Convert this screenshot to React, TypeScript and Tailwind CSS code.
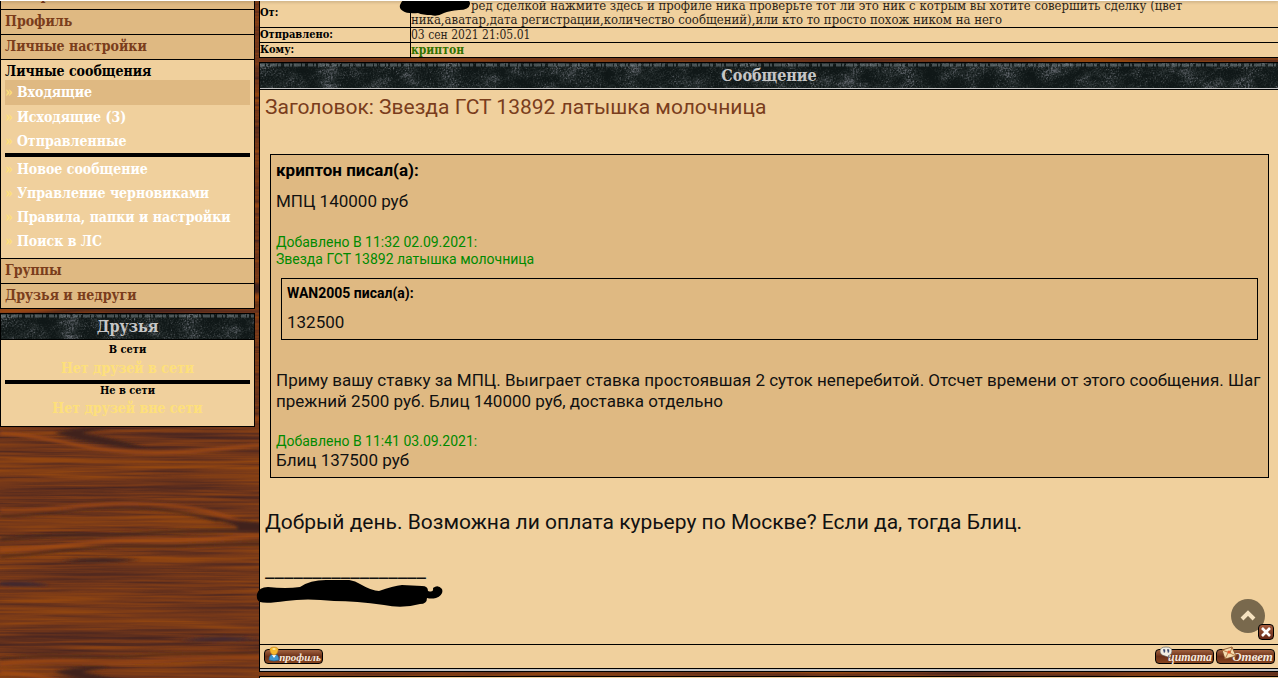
import type { ReactNode } from 'react'
import { ChevronUp } from 'lucide-react'

const SERIF = "font-['DejaVu_Serif_Condensed','DejaVu_Serif',serif]"

const FOLDERS = [
  { label: 'Входящие', active: true },
  { label: 'Исходящие (3)' },
  { label: 'Отправленные' },
]

const TOOLS = [
  { label: 'Новое сообщение' },
  { label: 'Управление черновиками' },
  { label: 'Правила, папки и настройки' },
  { label: 'Поиск в ЛС' },
]

function Filters() {
  return (
    <svg className="absolute size-0" aria-hidden="true">
      <defs>
        <filter id="wood" x="0" y="0" width="100%" height="100%" colorInterpolationFilters="sRGB">
          <feTurbulence type="fractalNoise" baseFrequency="0.004 0.035" numOctaves="2" seed="12" result="bands" />
          <feTurbulence type="fractalNoise" baseFrequency="0.008 0.3" numOctaves="3" seed="7" result="fibre" />
          <feComposite in="bands" in2="fibre" operator="arithmetic" k1="0" k2="0.45" k3="0.55" k4="0" />
          <feColorMatrix values="1 0 0 0 0  1 0 0 0 0  1 0 0 0 0  0 0 0 0 1" />
          <feComponentTransfer>
            <feFuncR type="table" tableValues="0.2 0.24 0.34 0.46 0.56 0.6 0.62" />
            <feFuncG type="table" tableValues="0.12 0.13 0.17 0.22 0.27 0.29 0.3" />
            <feFuncB type="table" tableValues="0.13 0.13 0.12 0.1 0.07 0.06 0.05" />
          </feComponentTransfer>
        </filter>
        <filter id="stone" x="0" y="0" width="100%" height="100%" colorInterpolationFilters="sRGB">
          <feTurbulence type="fractalNoise" baseFrequency="0.05 0.07" numOctaves="4" seed="4" result="big" />
          <feTurbulence type="fractalNoise" baseFrequency="0.6" numOctaves="2" seed="9" result="fine" />
          <feComposite in="big" in2="fine" operator="arithmetic" k1="0" k2="0.5" k3="0.5" k4="0" />
          <feColorMatrix values="1 0 0 0 0  1 0 0 0 0  1 0 0 0 0  0 0 0 0 1" />
          <feComponentTransfer>
            <feFuncR type="table" tableValues="0.06 0.06 0.06 0.07 0.14 0.32 0.46 0.5" />
            <feFuncG type="table" tableValues="0.09 0.09 0.09 0.1 0.17 0.34 0.48 0.5" />
            <feFuncB type="table" tableValues="0.09 0.09 0.09 0.1 0.17 0.36 0.5 0.5" />
          </feComponentTransfer>
        </filter>
        <filter id="soft" x="-10%" y="-50%" width="120%" height="200%">
          <feGaussianBlur stdDeviation="1.4" />
        </filter>
      </defs>
    </svg>
  )
}

function Wood() {
  return (
    <svg className="absolute inset-0 -z-10 size-full" aria-hidden="true">
      <defs>
        <g id="grain" filter="url(#soft)" fill="none">
          <path d="M0 3C60 7 80 20 135 22S220 18 262 15" stroke="#a34b14" strokeWidth="3" />
          <path d="M54 3Q75-3 110-2L82 3Q120 10 150 19Q105 18 54 3Z" fill="#3f231d" />
          <path d="M0 80C50 83 100 69 165 75S225 91 260 96" stroke="#9c4715" strokeWidth="3" />
          <path d="M0 86C50 86 90 75 130 77S190 84 218 91" stroke="#45251d" strokeWidth="2" />
          <path d="M175 81Q215 88 262 93V100L235 100Q245 96 218 91Z" fill="#3f231d" />
          <path d="M0 109C50 105 75 105 105 105S190 98 262 101" stroke="#45251d" strokeWidth="3" />
          <path d="M0 120C70 118 90 109 145 110S220 107 262 106" stroke="#a34b14" strokeWidth="3" />
          <path d="M0 127C60 122 90 115 145 116S220 113 262 114" stroke="#45251d" strokeWidth="2" />
          <path d="M60 131Q98 126 140 130Q98 134 60 131Z" fill="#3b2222" />
          <path d="M0 152Q30 151 50 155Q25 157 0 155ZM180 210Q220 204 262 209Q220 213 180 210Z" fill="#3b2530" />
          <path d="M0 229C60 222 90 231 140 226S220 225 262 223" stroke="#45251d" strokeWidth="2" />
          <path d="M0 234C60 228 90 235 150 231S220 228 262 227" stroke="#9c4715" strokeWidth="3" />
        </g>
      </defs>
      <rect width="100%" height="100%" filter="url(#wood)" />
      <use href="#grain" y="191" />
      <use href="#grain" y="430" />
      <use href="#grain" y="669" />
    </svg>
  )
}

function StoneHeader({ children }: { children: ReactNode }) {
  return (
    <h2 className="relative isolate flex h-[25px] items-center justify-center overflow-hidden text-base font-bold text-[#c6c6c6]">
      <svg className="absolute inset-0 -z-10 size-full" aria-hidden="true">
        <rect width="100%" height="100%" filter="url(#stone)" />
        <line x1="0" y1="2" x2="100%" y2="2" stroke="#8b969c" strokeOpacity="0.45" strokeWidth="3" strokeDasharray="5 1 2 2 7 1 3 3" />
      </svg>
      {children}
    </h2>
  )
}

function MenuRow({ children }: { children: ReactNode }) {
  return (
    <a href="#" className="flex h-[25px] items-center border-b border-black bg-[#dfb982] px-1 pb-0.5 text-[#7a3d1c]">
      {children}
    </a>
  )
}

function SubItem({ label, active }: { label: string; active?: boolean }) {
  return (
    <li className={active ? 'bg-[#dfb982] pb-px' : ''}>
      <a href="#" className="flex h-6 items-center gap-1 text-white">
        <span className="text-[#fee07a]">»</span>
        {label}
      </a>
    </li>
  )
}

function Sidebar() {
  return (
    <aside className="w-[255px] shrink-0 text-sm font-bold">
      <nav className="border-x border-black">
        <a href="#" className="flex h-[10px] items-end overflow-hidden border-b border-black bg-[#dfb982] px-1 pb-1 text-[#7a3d1c]">
          Обзор
        </a>
        <MenuRow>Профиль</MenuRow>
        <MenuRow>Личные настройки</MenuRow>
        <div className="border-b border-black bg-[#f0d09d] px-1 pb-[5px]">
          <p className="h-5 leading-[22px]">Личные сообщения</p>
          <ul>
            {FOLDERS.map((item) => (
              <SubItem key={item.label} {...item} />
            ))}
          </ul>
          <hr className="border-0 border-t-4 border-black" />
          <ul>
            {TOOLS.map((item) => (
              <SubItem key={item.label} {...item} />
            ))}
          </ul>
        </div>
        <MenuRow>Группы</MenuRow>
        <MenuRow>Друзья и недруги</MenuRow>
      </nav>
      <section className="mt-1 border border-black bg-[#f0d09d] text-center">
        <StoneHeader>Друзья</StoneHeader>
        <div className="border-t border-black px-1 pb-2">
          <h3 className="h-[18px] text-[11px] leading-5">В сети</h3>
          <p className="h-[22px] leading-5 text-[#fee07a]">Нет друзей в сети</p>
          <hr className="border-0 border-t-4 border-black" />
          <h3 className="text-[11px] leading-[14px]">Не в сети</h3>
          <p className="leading-5 text-[#fee07a]">Нет друзей вне сети</p>
        </div>
      </section>
    </aside>
  )
}

function Details() {
  return (
    <table className="-mt-px w-full border-collapse border border-t-0 border-r-0 border-black bg-[#f0d09d] text-xs leading-[14px]">
      <tbody>
        <tr className="border-b border-black">
          <th className="w-[151px] border-r border-black p-0 text-left text-[11px]">От:</th>
          <td className="relative p-0 text-[13px] text-[#2c2418]">
            <svg className="absolute -top-1 -left-3 h-[22px] w-[75px]" viewBox="0 0 75 22" aria-hidden="true">
              <path d="M1 10Q4 2 12 3L58 2Q72 4 71 9Q70 15 60 15Q50 16 45 18Q38 22 32 20Q24 20 19 18Q8 19 4 16Q0 14 1 10Z" />
            </svg>
            <span className="inline-block w-[60px]" />
            ред сделкой нажмите здесь и профиле ника проверьте тот ли это ник с котрым вы хотите совершить сделку (цвет
            <br />
            ника,аватар,дата регистрации,количество сообщений),или кто то просто похож ником на него
          </td>
        </tr>
        <tr className="border-b border-black">
          <th className="border-r border-black p-0 text-left text-[11px]">Отправлено:</th>
          <td className="p-0 text-[#2c2418]">03 сен 2021 21:05.01</td>
        </tr>
        <tr>
          <th className="border-r border-black p-0 text-left text-[11px]">Кому:</th>
          <td className="p-0">
            <a href="#" className="font-bold text-[#317100]">криптон</a>
          </td>
        </tr>
      </tbody>
    </table>
  )
}

function WoodButton({ label, icon, className }: { label: string; icon: ReactNode; className?: string }) {
  return (
    <button
      type="button"
      className={`relative flex h-[15px] w-[59px] items-center justify-end rounded border border-black bg-linear-to-b from-[#a0623f] via-[#6c3018] to-[#87451f] pr-px font-['Liberation_Serif',serif] leading-3 font-bold text-[#f5e9df] italic ${className ?? ''}`}
    >
      {icon}
      {label}
    </button>
  )
}

function UserIcon() {
  return (
    <svg className="absolute -top-1 left-0.5 h-4 w-[14px]" viewBox="0 0 14 16" aria-hidden="true">
      <path d="M2 14Q2 8 7 8T12 14Q7 16 2 14Z" fill="#3d95cc" stroke="#1c5d8c" strokeWidth=".6" />
      <path d="M5 9L7 12L9 9Z" fill="#fff" />
      <path d="M3 5Q2 1 7 1T11 5Q10 9 7 9T3 5Z" fill="#f5b82e" stroke="#b8741c" strokeWidth=".5" />
      <path d="M5 3Q7 1 9 3Q7 5 5 3Z" fill="#ffe897" />
    </svg>
  )
}

function QuoteIcon() {
  return (
    <svg className="absolute -top-1 left-1 h-[13px] w-3" viewBox="0 0 12 13" aria-hidden="true">
      <path d="M6 1Q12 1 12 5T8 10L11 12L5 10Q0 9 0 5T6 1Z" fill="#f2eee2" stroke="#555" strokeWidth=".6" />
      <path d="M3 3.5H5V5.5L4 7M7 3.5H9V5.5L8 7" fill="#39476d" stroke="#39476d" strokeWidth=".4" />
    </svg>
  )
}

function EnvelopeIcon() {
  return (
    <svg className="absolute -top-1 left-1 h-[15px] w-4" viewBox="0 0 16 15" aria-hidden="true">
      <path d="M1 4L11 1L15 10L4 13Z" fill="#f5dcae" stroke="#7d4b25" strokeWidth=".8" />
      <path d="M1 4L9 7L11 1M4 13L7 7M15 10L9 7" fill="none" stroke="#a55e2b" strokeWidth=".8" />
      <circle cx="8" cy="6" r="1.6" fill="#e4572a" />
    </svg>
  )
}

function Message() {
  return (
    <section className="mt-1 border border-r-0 border-black bg-[#f0d09d]">
      <StoneHeader>Сообщение</StoneHeader>
      <div className="h-0.5 border-b border-black bg-[#c4c4c4]" />
      <article className="relative px-[5px] pb-[62px] font-['Roboto',sans-serif] text-[#111]">
        <h1 className="pt-[5px] text-[21px] leading-6 text-[#7a3d1c]">Заголовок: Звезда ГСТ 13892 латышка молочница</h1>

        <blockquote className="mx-[5px] mt-[35px] mr-1 border border-black bg-[#dfb982] px-[5px] pb-1.5 text-[17px] leading-[21px]">
          <p className="pt-[5px] font-bold text-black">криптон писал(а):</p>
          <p className="mt-2.5">МПЦ 140000 руб</p>
          <p className="mt-[22px] text-sm leading-[17px] text-[#008a00]">
            Добавлено В 11:32 02.09.2021:
            <br />
            Звезда ГСТ 13892 латышка молочница
          </p>
          <blockquote className="mx-[5px] mt-2.5 border border-black px-[5px] pb-1.5">
            <p className="pt-1 text-sm leading-[21px] font-bold text-black">WAN2005 писал(а):</p>
            <p className="mt-2">132500</p>
          </blockquote>
          <p className="mt-[30px]">
            Приму вашу ставку за МПЦ. Выиграет ставка простоявшая 2 суток неперебитой. Отсчет времени от этого сообщения. Шаг
            прежний 2500 руб. Блиц 140000 руб, доставка отдельно
          </p>
          <p className="mt-[21px] text-sm leading-[17px] text-[#008a00]">Добавлено В 11:41 03.09.2021:</p>
          <p>Блиц 137500 руб</p>
        </blockquote>

        <p className="mt-8 text-[21px] leading-6">Добрый день. Возможна ли оплата курьеру по Москве? Если да, тогда Блиц.</p>
        <p className="mt-6 text-[21px] leading-6">_________________</p>
        <svg className="absolute bottom-8 -left-1 h-8 w-[188px]" viewBox="0 0 188 32" aria-hidden="true">
          <path d="M1 14Q3 7 12 7Q30 9 44 7Q54 0 70 0Q93-3 104 4Q116 11 123 11Q137 6 146 5L166 6Q172 6 172 11Q178 13 177 8Q182 4 186 9Q188 15 180 18Q175 19 171 18Q171 24 164 24Q146 29 128 25Q100 21 78 21Q50 18 30 21Q10 24 4 22Q0 20 1 14Z" />
        </svg>

        <button type="button" aria-label="Наверх" className="absolute right-[13px] bottom-[11px] flex size-[34px] items-center justify-center rounded-full bg-[#79694d] text-[#f5e2c0]">
          <ChevronUp className="size-6" strokeWidth={4} strokeLinecap="butt" strokeLinejoin="miter" />
        </button>
        <button type="button" aria-label="Закрыть" className="absolute right-1 bottom-1 flex size-4 items-center justify-center rounded border border-black bg-linear-to-b from-[#a35b3d] to-[#682a18]">
          <svg className="size-2.5" viewBox="0 0 10 10" aria-hidden="true">
            <path d="M1 1L9 9M9 1L1 9" stroke="#fff" strokeWidth="2.6" />
          </svg>
        </button>
      </article>
      <footer className="flex h-6 items-center gap-0.5 border-t border-black pr-[3px] pl-1">
        <WoodButton label="профиль" icon={<UserIcon />} className="text-[11px]" />
        <WoodButton label="цитата" icon={<QuoteIcon />} className="ml-auto text-xs" />
        <WoodButton label="Ответ" icon={<EnvelopeIcon />} className="text-[13px]" />
      </footer>
      <div className="h-[3px] border-t border-black bg-[#c4c4c4]" />
    </section>
  )
}

export default function App() {
  return (
    <div className={`relative isolate h-screen overflow-hidden bg-[#713719] text-black ${SERIF}`}>
      <Filters />
      <Wood />
      <div className="flex items-start gap-1">
        <Sidebar />
        <main className="min-w-0 flex-1">
          <Details />
          <Message />
          <section className="mt-1 h-6 border border-r-0 border-black bg-[#f0d09d]" />
        </main>
      </div>
      <div className="absolute inset-x-0 top-0 h-px bg-white shadow-[0_1px_3px_rgba(0,0,0,0.35)]" />
    </div>
  )
}
